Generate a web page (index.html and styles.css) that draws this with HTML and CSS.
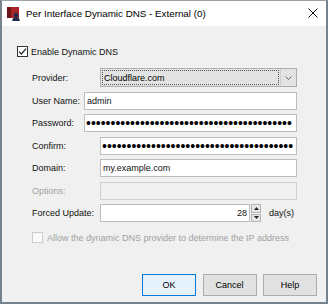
FILE: index.html
```html
<!DOCTYPE html>
<html lang="en">
<head>
    <meta charset="UTF-8">
    <meta name="viewport" content="width=device-width, initial-scale=1.0">
    <title>Per Interface Dynamic DNS</title>
    <link rel="stylesheet" href="styles.css">
</head>
<body>
    <div class="dialog">
        <div class="titlebar">
            <svg class="app-icon" width="14" height="14" viewBox="0 0 14 14">
                <rect x="0" y="0" width="12" height="11" fill="#a8262a"/>
                <rect x="0" y="0" width="4" height="11" fill="#6e1418"/>
                <circle cx="9" cy="8" r="2.3" fill="#1e2b4c"/>
                <path d="M5.2 14 Q5.2 10.2 9 10.2 Q12.8 10.2 12.8 14 Z" fill="#1e2b4c"/>
            </svg>
            <span class="title">Per Interface Dynamic DNS - External (0)</span>
            <svg class="close" width="10" height="10" viewBox="0 0 10 10">
                <path d="M0.5 0.5 L9.5 9.5 M9.5 0.5 L0.5 9.5" stroke="#111" stroke-width="1"/>
            </svg>
        </div>

        <div class="content">
            <label class="check-row">
                <span class="box">
                    <svg width="9" height="9" viewBox="0 0 9 9"><path d="M1 4.6 L3.4 7 L8 1.6" fill="none" stroke="#222" stroke-width="1.2"/></svg>
                </span>
                Enable Dynamic DNS
            </label>

            <div class="form">
                <div class="row">
                    <span class="lbl">Provider:</span>
                    <div class="combo">
                        <span class="combo-value">Cloudflare.com</span>
                        <span class="combo-arrow">
                            <svg width="7" height="4" viewBox="0 0 7 4"><path d="M0.5 0.5 L3.5 3.5 L6.5 0.5" fill="none" stroke="#666" stroke-width="1"/></svg>
                        </span>
                    </div>
                </div>
                <div class="row short">
                    <label class="lbl" for="user">User Name:</label>
                    <input class="field" id="user" type="text" value="admin">
                </div>
                <div class="row short">
                    <label class="lbl" for="pass">Password:</label>
                    <input class="field secret" id="pass" type="password" value="aaaaaaaaaaaaaaaaaaaaaaaaaaaaaaaaaaaaaaaaaa">
                </div>
                <div class="row">
                    <label class="lbl" for="confirm">Confirm:</label>
                    <input class="field secret" id="confirm" type="password" value="aaaaaaaaaaaaaaaaaaaaaaaaaaaaaaaaaaaaaaa">
                </div>
                <div class="row">
                    <label class="lbl" for="domain">Domain:</label>
                    <input class="field" id="domain" type="text" value="my.example.com">
                </div>
                <div class="row">
                    <label class="lbl off" for="options">Options:</label>
                    <input class="field" id="options" type="text" disabled>
                </div>
                <div class="row">
                    <label class="lbl" for="days">Forced Update:</label>
                    <input class="field num" id="days" type="text" value="28">
                    <div class="spinner">
                        <span class="spin-btn"><svg width="5" height="3" viewBox="0 0 5 3"><path d="M0 3 L2.5 0 L5 3 Z" fill="#222"/></svg></span>
                        <span class="spin-btn"><svg width="5" height="3" viewBox="0 0 5 3"><path d="M0 0 L2.5 3 L5 0 Z" fill="#222"/></svg></span>
                    </div>
                    <span class="unit">day(s)</span>
                </div>

                <label class="check-row disabled">
                    <span class="box"></span>
                    Allow the dynamic DNS provider to determine the IP address
                </label>
            </div>
        </div>

        <div class="buttons">
            <button class="btn default">OK</button>
            <button class="btn">Cancel</button>
            <button class="btn">Help</button>
        </div>
    </div>
</body>
</html>
```

FILE: styles.css
```css
body {
    margin: 0;
    background-color: #fff;
    font-family: "Liberation Sans", Arial, sans-serif;
    font-size: 9px;
    color: #111;
}
.dialog {
    width: 328px;
    height: 304px;
    box-sizing: border-box;
    border: 2px solid #76828c;
    border-top: 1px solid #9aa3aa;
    background-color: #f0f0f0;
    display: flex;
    flex-direction: column;
}
.titlebar {
    height: 25px;
    background-color: #fff;
    display: flex;
    align-items: center;
    padding: 0 8px 0 5px;
    flex-shrink: 0;
}
.app-icon {
    margin-right: 5px;
    margin-top: 1px;
}
.title {
    font-size: 9.8px;
    color: #000;
    flex: 1;
}
.close {
    margin-top: -1px;
}
.content {
    padding: 20px 29px 0 15px;
}
.check-row {
    display: flex;
    align-items: center;
    gap: 3px;
    height: 11px;
}
.box {
    width: 11px;
    height: 11px;
    box-sizing: border-box;
    border: 1px solid #333;
    background-color: #fff;
    display: flex;
    align-items: center;
    justify-content: center;
}
.form {
    margin: 11px 0 0 15px;
    display: flex;
    flex-direction: column;
    gap: 4.5px;
}
.row {
    display: flex;
    align-items: center;
    height: 18px;
}
.row:first-child {
    height: 19px;
}
.lbl {
    width: 68px;
    flex-shrink: 0;
}
.row.short .lbl {
    width: 52px;
}
.lbl.off {
    color: #a0a0a0;
}
.field {
    flex: 1;
    min-width: 0;
    height: 18px;
    box-sizing: border-box;
    border: 1px solid #bdbdbd;
    background-color: #fff;
    padding: 0 2px;
    font-family: inherit;
    font-size: 9px;
    color: #111;
    outline: none;
}
.field:disabled {
    background-color: #f0f0f0;
    border-color: #cfcfcf;
}
.field.secret {
    font-size: 14px;
    padding: 0 1px;
    color: #000;
}
.field.num {
    text-align: right;
}
.combo {
    flex: 1;
    height: 19px;
    box-sizing: border-box;
    border: 1px solid #adadad;
    background-color: #e3e3e3;
    display: flex;
    align-items: stretch;
}
.combo-value {
    flex: 1;
    margin: 1px;
    border: 1px dotted #555;
    padding-left: 1px;
    display: flex;
    align-items: center;
    color: #000;
}
.combo-arrow {
    width: 15px;
    border-left: 1px solid #cfcfcf;
    display: flex;
    align-items: center;
    justify-content: center;
}
.spinner {
    width: 10px;
    height: 18px;
    margin-left: 1px;
    display: flex;
    flex-direction: column;
    gap: 1px;
}
.spin-btn {
    flex: 1;
    border: 1px solid #b5b5b5;
    background-color: #e6e6e6;
    display: flex;
    align-items: center;
    justify-content: center;
}
.unit {
    margin-left: 8px;
    width: 28px;
}
.check-row.disabled {
    margin-top: 5.5px;
    gap: 4px;
    color: #a0a0a0;
}
.check-row.disabled .box {
    border-color: #cccccc;
    background-color: #fafafa;
}
.buttons {
    margin-top: auto;
    padding: 0 9px 6px 0;
    display: flex;
    justify-content: flex-end;
    gap: 6.5px;
}
.btn {
    width: 54px;
    height: 22px;
    border: 1px solid #adadad;
    background-color: #e1e1e1;
    font-family: inherit;
    font-size: 9px;
    color: #000;
    padding: 0;
}
.btn.default {
    border-color: #0078d7;
    background-color: #e5f1fb;
}
```
